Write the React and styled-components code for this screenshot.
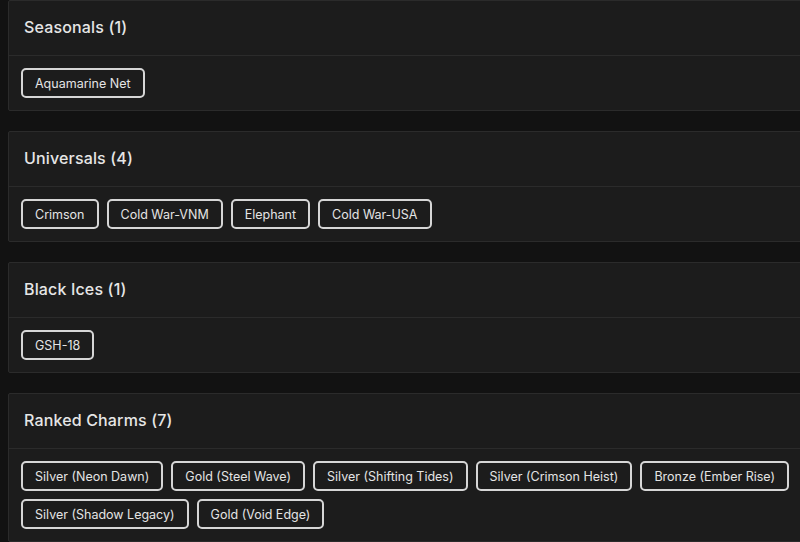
import React from "react";
import styled, { createGlobalStyle } from "styled-components";

const Global = createGlobalStyle`
  html, body { margin: 0; padding: 0; background: #121212; overflow: hidden; }
  body { font-family: "Inter", "Noto Sans", sans-serif; }
`;

const Viewport = styled.div`
  width: 100vw;
  overflow: hidden;
`;

const Page = styled.div`
  padding: 0 0 0 8px;
  display: flex;
  flex-direction: column;
  gap: 20px;
  width: 940px;
`;

const Card = styled.section`
  background: #1c1c1c;
  border: 1px solid #2b2b2b;
  border-radius: 2px;
`;

const Header = styled.div`
  height: 54px;
  display: flex;
  align-items: center;
  padding: 0 15px;
  border-bottom: 1px solid #2b2b2b;
`;

const Title = styled.h2`
  margin: 0;
  font-size: 16px;
  font-weight: 500;
  color: #e6e6e6;
  letter-spacing: 0.15px;
  line-height: 1;
  padding-bottom: 3px;
`;

const Body = styled.div`
  padding: 12px;
  display: flex;
  flex-wrap: wrap;
  gap: 8px 8px;
`;

const Chip = styled.span`
  box-sizing: border-box;
  height: 30px;
  display: inline-flex;
  align-items: center;
  padding: 0 12px;
  border: 2px solid #d6d6d6;
  border-radius: 5px;
  font-size: 12.5px;
  color: #e4e4e4;
  white-space: nowrap;
`;

const groups = [
  { title: "Seasonals", items: ["Aquamarine Net"] },
  { title: "Universals", items: ["Crimson", "Cold War-VNM", "Elephant", "Cold War-USA"] },
  { title: "Black Ices", items: ["GSH-18"] },
  {
    title: "Ranked Charms",
    items: [
      "Silver (Neon Dawn)",
      "Gold (Steel Wave)",
      "Silver (Shifting Tides)",
      "Silver (Crimson Heist)",
      "Bronze (Ember Rise)",
      "Silver (Shadow Legacy)",
      "Gold (Void Edge)",
    ],
  },
];

export default function App() {
  return (
    <>
      <Global />
      <Viewport>
        <Page>
          {groups.map((g) => (
            <Card key={g.title}>
              <Header>
                <Title>
                  {g.title} ({g.items.length})
                </Title>
              </Header>
              <Body>
                {g.items.map((it) => (
                  <Chip key={it}>{it}</Chip>
                ))}
              </Body>
            </Card>
          ))}
        </Page>
      </Viewport>
    </>
  );
}
